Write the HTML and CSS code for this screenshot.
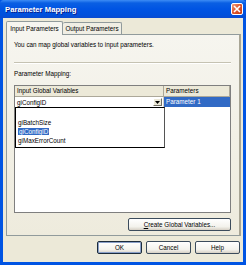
FILE: index.html
```html
<!DOCTYPE html>
<html lang="en">
  <head>
    <meta charset="UTF-8" />
    <title>Parameter Mapping</title>
    <link rel="stylesheet" href="styles.css">
  </head>
  <body>
    <div class="window">
      <div class="titlebar">
        <span class="title">Parameter Mapping</span>
        <span class="close">
          <svg width="8" height="8" viewBox="0 0 8 8">
            <path d="M1 1 L7 7 M7 1 L1 7" stroke="#fff" stroke-width="1.6" />
          </svg>
        </span>
      </div>
      <div class="client">
        <div class="tabs">
          <div class="tab active">Input Parameters</div>
          <div class="tab">Output Parameters</div>
        </div>
        <div class="panel">
          <p class="intro">You can map global variables to input parameters.</p>
          <div class="separator"></div>
          <p class="label">Parameter Mapping:</p>
          <div class="grid">
            <div class="grid-head">
              <div class="head-cell">Input Global Variables</div>
              <div class="head-cell">Parameters</div>
            </div>
            <div class="grid-body">
              <div class="col-vars">
                <div class="combo">
                  <span class="combo-text">giConfigID</span>
                  <span class="combo-arrow">
                    <svg width="5" height="3" viewBox="0 0 5 3"><path d="M0 0 H5 L2.5 3 Z" fill="#000" /></svg>
                  </span>
                </div>
                <ul class="dropdown">
                  <li></li>
                  <li>giBatchSize</li>
                  <li><span class="picked">giConfigID</span></li>
                  <li>giMaxErrorCount</li>
                </ul>
              </div>
              <div class="col-params">
                <div class="param-cell selected">Parameter 1</div>
              </div>
            </div>
          </div>
          <div class="panel-actions">
            <button class="btn wide"><u>C</u>reate Global Variables...</button>
          </div>
        </div>
        <div class="dialog-actions">
          <button class="btn default">OK</button>
          <button class="btn">Cancel</button>
          <button class="btn">Help</button>
        </div>
      </div>
    </div>
  </body>
</html>
```

FILE: styles.css
```css
body {
  margin: 0;
  font-family: "Liberation Sans", Arial, sans-serif;
  font-size: 6.3px;
  color: #000;
  background: #fff;
}
.window {
  width: 246px;
  height: 265px;
  display: flex;
  flex-direction: column;
  background: #0054e3;
}
.titlebar {
  height: 18px;
  flex: none;
  display: flex;
  align-items: center;
  justify-content: space-between;
  padding: 0 3px 0 5px;
  background: linear-gradient(#3d8cf5 0, #0a5fe3 3px, #0054e3 9px, #0050dc 15px, #0a4ad0 18px);
  border-radius: 4px 4px 0 0;
  box-sizing: border-box;
}
.title {
  color: #fff;
  font-weight: bold;
  font-size: 7.7px;
  text-shadow: 1px 1px 0 #0a1e8c;
}
.close {
  width: 12px;
  height: 12px;
  box-sizing: border-box;
  border: 1px solid #fff;
  border-radius: 2px;
  background: linear-gradient(135deg, #f0a080, #e05a30 45%, #c83c14);
  display: flex;
  align-items: center;
  justify-content: center;
}
.client {
  flex: 1;
  margin: 0 3px 3px 3px;
  background: #ece9d8;
  display: flex;
  flex-direction: column;
  padding-top: 3px;
}
.tabs {
  display: flex;
  height: 13px;
  margin-left: 3px;
}
.tab {
  border: 1px solid #919b9c;
  border-bottom: none;
  border-radius: 2px 2px 0 0;
  padding: 0;
  display: flex;
  align-items: center;
  justify-content: center;
  white-space: nowrap;
  box-sizing: border-box;
  background: #f0eee4;
  margin-top: 1px;
}
.tab.active {
  margin-top: 0;
  width: 57px;
  background: #f6f5ef;
  position: relative;
  z-index: 1;
  margin-bottom: -1px;
}
.tab + .tab {
  width: 59px;
  border-left: none;
}
.panel {
  margin: 0 2px 0 3px;
  height: 202px;
  box-sizing: border-box;
  border: 1px solid #919b9c;
  border-right: 2px solid #a8a595;
  background: linear-gradient(#f6f5ef, #eeebdd);
  padding: 6px 8px 0 7px;
  display: flex;
  flex-direction: column;
}
.intro,
.label {
  margin: 0;
  line-height: 8px;
  height: 8px;
}
.separator {
  margin: 13px 0 6px;
  height: 1px;
  background: #c5c2b2;
  border-bottom: 1px solid #fff;
}
.grid {
  margin-top: 7px;
  height: 128px;
  box-sizing: border-box;
  border: 1px solid #7f7f7f;
  background: #fff;
  display: flex;
  flex-direction: column;
}
.grid-head {
  display: grid;
  grid-template-columns: 149px 1fr;
  height: 11px;
  flex: none;
}
.head-cell {
  background: #ece9d8;
  border-right: 1px solid #aca899;
  border-bottom: 1px solid #aca899;
  padding-left: 2px;
  line-height: 10px;
}
.grid-body {
  flex: 1;
  display: grid;
  grid-template-columns: 149px 1fr;
}
.col-vars {
  position: relative;
}
.combo {
  height: 10px;
  display: flex;
  align-items: center;
  justify-content: space-between;
  padding-left: 2px;
  border-right: 1px solid #d4d0c8;
}
.combo-arrow {
  width: 9px;
  height: 8px;
  margin-right: 1px;
  background: #ece9d8;
  border: 1px solid;
  border-color: #fff #716f64 #716f64 #fff;
  box-sizing: border-box;
  display: flex;
  align-items: center;
  justify-content: center;
}
.dropdown {
  position: absolute;
  top: 10px;
  left: 0;
  width: 150px;
  height: 41px;
  box-sizing: border-box;
  margin: 0;
  padding: 1px 0 0 1px;
  list-style: none;
  background: #fff;
  border: 1px solid #000;
  border-right-color: #555;
  z-index: 2;
}
.dropdown li {
  height: 9px;
  line-height: 9px;
  padding-left: 1px;
}
.picked {
  background: #316ac5;
  color: #fff;
  padding: 0 1px;
}
.param-cell {
  height: 10px;
  line-height: 10px;
  padding-left: 2px;
}
.selected {
  background: #316ac5;
  color: #fff;
}
.panel-actions {
  display: flex;
  justify-content: flex-end;
  margin-top: 5px;
}
.btn {
  font-family: "Liberation Sans", Arial, sans-serif;
  font-size: 6.3px;
  color: #000;
  height: 13px;
  width: 45px;
  padding: 0;
  border: 1px solid #3c4c5c;
  border-radius: 2px;
  background: linear-gradient(#fff, #f3f2ec 70%, #d6d0c5);
}
.btn.wide {
  width: 103px;
}
.btn.default {
  border-color: #1c2c3c;
  box-shadow: inset 0 0 0 1px #8aa0c8;
}
.dialog-actions {
  display: flex;
  justify-content: flex-end;
  gap: 4px;
  margin: 5px 3px 0 0;
}
```
